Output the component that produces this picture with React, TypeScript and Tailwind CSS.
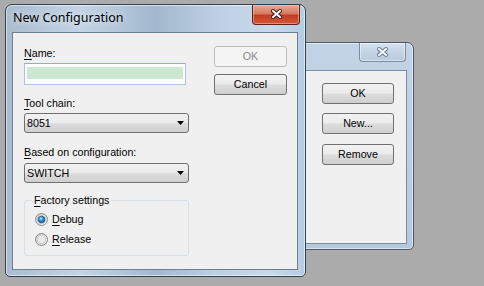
import type { ReactNode } from "react";

function CloseGlyph({ dark, light }: { dark: string; light: string }) {
  return (
    <svg width="11" height="10" viewBox="0 0 11 10">
      <path d="M2 2 L9 8 M9 2 L2 8" stroke={dark} strokeWidth="4" strokeLinecap="square" />
      <path d="M2 2 L9 8 M9 2 L2 8" stroke={light} strokeWidth="2" strokeLinecap="square" />
    </svg>
  );
}

function Button({ children, disabled }: { children: ReactNode; disabled?: boolean }) {
  return (
    <div
      className={`flex h-[21px] items-center justify-center rounded-[3px] border ${
        disabled
          ? "border-[#b8bcc0] bg-[#f4f4f4] text-[#8a8a8a]"
          : "border-[#707070] bg-[linear-gradient(180deg,#f2f2f2_0%,#ebebeb_48%,#dddddd_52%,#cfcfcf_100%)] text-black"
      }`}
    >
      {children}
    </div>
  );
}

function Mn({ c }: { c: string }) {
  return <span className="underline decoration-1 underline-offset-[2px]">{c}</span>;
}

function Combo({ value }: { value: string }) {
  return (
    <div className="flex h-[20px] items-center justify-between rounded-[3px] border border-[#707070] bg-[linear-gradient(180deg,#f2f2f2_0%,#ebebeb_48%,#dddddd_52%,#cfcfcf_100%)] pl-[2px] pr-[4px]">
      <span>{value}</span>
      <svg width="7" height="4" viewBox="0 0 7 4">
        <path d="M0 0 H7 L3.5 4 Z" fill="#000" />
      </svg>
    </div>
  );
}

function Radio({ checked }: { checked?: boolean }) {
  return (
    <svg width="13" height="13" viewBox="0 0 13 13">
      <defs>
        <linearGradient id="rbg" x1="0" y1="0" x2="1" y2="1">
          <stop offset="0" stopColor="#cbcbcb" />
          <stop offset="1" stopColor="#f7f7f7" />
        </linearGradient>
        <radialGradient id="rdot" cx="0.4" cy="0.35" r="0.7">
          <stop offset="0" stopColor="#b4e6ff" />
          <stop offset="0.5" stopColor="#2f8fdc" />
          <stop offset="1" stopColor="#0f4f8f" />
        </radialGradient>
      </defs>
      <circle cx="6.5" cy="6.5" r="6" fill="url(#rbg)" stroke="#8c8c8c" strokeWidth="1" />
      <circle cx="6.5" cy="6.5" r="4.2" fill="#e9e9e9" stroke="#c4c4c4" strokeWidth="0.8" />
      {checked && <circle cx="6.5" cy="6.5" r="3.3" fill="url(#rdot)" stroke="#1d4f7c" strokeWidth="0.8" />}
    </svg>
  );
}

function BackWindow() {
  return (
    <div className="absolute left-[250px] top-[42px] flex h-[208px] w-[164px] flex-col rounded-t-[7px] rounded-b-[5px] border border-[#4d5966] bg-[linear-gradient(180deg,#c2d3e5_0%,#bdd0e4_40%,#b5c9de_100%)] shadow-[inset_0_0_0_1px_rgba(255,255,255,0.5)]">
      <div className="flex h-[27px] shrink-0 justify-end pr-[7px]">
        <div className="flex h-[19px] w-[47px] items-center justify-center rounded-b-[4px] border border-t-0 border-[#7d8c9c] bg-[linear-gradient(180deg,#d6e2ee_0%,#c4d4e5_50%,#b9cbde_100%)] shadow-[inset_0_0_0_1px_rgba(255,255,255,0.45)]">
          <CloseGlyph dark="#6b7a8b" light="#f4f7fa" />
        </div>
      </div>
      <div className="mb-[5px] ml-[6px] mr-[6px] flex flex-1 flex-col items-end border border-[#7f8d9b] bg-[#f0f0f0] pr-[12px] pt-[12px]">
        <div className="w-[72px]">
          <Button>OK</Button>
        </div>
        <div className="mt-[9px] w-[72px]">
          <Button>New...</Button>
        </div>
        <div className="mt-[10px] w-[72px]">
          <Button>Remove</Button>
        </div>
      </div>
    </div>
  );
}

function FrontWindow() {
  return (
    <div className="absolute left-[5px] top-[4px] flex h-[273px] w-[301px] flex-col rounded-t-[7px] rounded-b-[5px] border border-[#33414f] bg-[linear-gradient(90deg,#a9bccf_0%,#c3d4e6_25%,#a3b8ce_50%,#bccfe3_70%,#c9d9ea_88%,#b4cde3_100%)] shadow-[inset_0_0_0_1px_rgba(255,255,255,0.55)]">
      <div className="flex h-[27px] shrink-0 items-start">
        <div className="pl-[7px] pt-[5px] font-['Noto_Sans',sans-serif] text-[12.5px] leading-[16px] text-black [text-shadow:0_0_6px_rgba(255,255,255,0.9)]">
          New Configuration
        </div>
        <div className="ml-auto mr-[5px] flex h-[20px] w-[48px] items-center justify-center rounded-b-[4px] border border-t-0 border-[#5b2419] bg-[linear-gradient(180deg,#e9a896_0%,#d67a63_45%,#c43d22_55%,#d0573b_100%)] pb-[2px] shadow-[inset_0_0_0_1px_rgba(255,210,190,0.45)]">
          <CloseGlyph dark="#3b1710" light="#ffffff" />
        </div>
      </div>
      <div className="mb-[6px] ml-[6px] mr-[7px] flex flex-1 border border-[#6e7f91] bg-[#f0f0f0] pl-[11px] pt-[14px]">
        <div className="flex w-[165px] flex-col">
          <div>
            <Mn c="N" />ame:
          </div>
          <div className="mt-[3px] flex h-[22px] w-[162px] flex-col border border-[#a9c5e2] border-t-[#8cafd4] bg-white px-[2px] pt-[3px]">
            <div className="h-[12px] bg-[#cce8d0]" />
          </div>
          <div className="mt-[12px]">
            <Mn c="T" />ool chain:
          </div>
          <div className="mt-[3px]">
            <Combo value="8051" />
          </div>
          <div className="mt-[13px]">
            <Mn c="B" />ased on configuration:
          </div>
          <div className="mt-[4px]">
            <Combo value="SWITCH" />
          </div>
          <div className="relative mt-[17px] flex h-[56px] flex-col gap-[7px] rounded-[3px] border border-[#d5dfe5] pl-[10px] pt-[12px]">
            <span className="absolute -top-[7px] left-[7px] bg-[#f0f0f0] px-[2px]">
              <Mn c="F" />actory settings
            </span>
            <div className="flex items-center gap-[4px]">
              <Radio checked />
              <span>
                <Mn c="D" />ebug
              </span>
            </div>
            <div className="flex items-center gap-[4px]">
              <Radio />
              <span>
                <Mn c="R" />elease
              </span>
            </div>
          </div>
        </div>
        <div className="-mt-[1px] ml-[25px] flex w-[73px] flex-col gap-[7px]">
          <Button disabled>OK</Button>
          <Button>Cancel</Button>
        </div>
      </div>
    </div>
  );
}

export default function App() {
  return (
    <div className="relative h-[286px] w-[484px] overflow-hidden bg-[#ababab] font-['Liberation_Sans',Arial,sans-serif] text-[10.7px] leading-[13px] text-black">
      <BackWindow />
      <FrontWindow />
    </div>
  );
}
